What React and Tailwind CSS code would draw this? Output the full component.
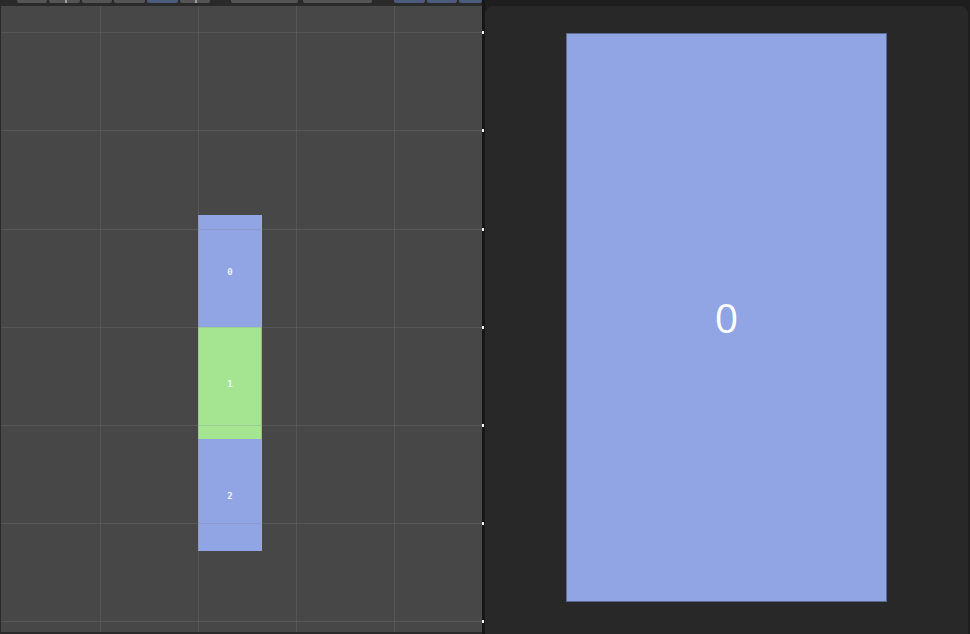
import React from "react";

const gridXs = [100, 198, 296, 394];
const gridYs = [26, 124, 223, 321, 419, 517, 615];

function Btn({ w, blue, mark }) {
  return (
    <div
      className={`h-[3px] rounded-b-[2px] relative ${blue ? "bg-[#4b5b7b]" : "bg-[#545454]"}`}
      style={{ width: w }}
    >
      {mark && <div className="absolute left-1/2 top-0 w-[2px] h-[3px] bg-[#9aa0a0]" />}
    </div>
  );
}

export default function App() {
  return (
    <div className="w-[970px] h-[634px] flex bg-[#1e1e1e] overflow-hidden" style={{ fontFamily: '"Open Sans", "DejaVu Sans", sans-serif' }}>
      {/* Left editor */}
      <div className="w-[482px] h-full flex flex-col">
        <div className="h-[6px] bg-[#2a2a2a] flex items-start pl-[17px] gap-[2px]">
          <Btn w={31} />
          <Btn w={31} mark />
          <Btn w={31} />
          <Btn w={32} />
          <Btn w={31} blue />
          <Btn w={31} mark />
          <div className="w-[17px]" />
          <Btn w={68} />
          <div className="w-[2px]" />
          <Btn w={70} />
          <div className="w-[18px]" />
          <Btn w={32} blue />
          <Btn w={31} blue />
          <Btn w={23} blue />
        </div>
        <div className="flex-1 relative bg-[#474747] border-l border-b-2 border-[#2a2a2a] overflow-hidden">
          {/* clip column */}
          <div className="absolute left-[197px] top-[209px] w-[64px] flex flex-col border-r border-[#a4acc4]">
            <div className="h-[112px] pt-[3px] pl-[1px] bg-[#91a4e4] flex items-center justify-center text-[9px] font-semibold text-[#eef1ff]" style={{ fontFamily: '"DejaVu Sans Mono", monospace' }}>0</div>
            <div className="h-[112px] pt-[3px] pl-[1px] bg-[#a5e592] flex items-center justify-center text-[9px] font-semibold text-[#f0fff0]" style={{ fontFamily: '"DejaVu Sans Mono", monospace' }}>1</div>
            <div className="h-[112px] pt-[3px] pl-[1px] bg-[#91a4e4] flex items-center justify-center text-[9px] font-semibold text-[#eef1ff]" style={{ fontFamily: '"DejaVu Sans Mono", monospace' }}>2</div>
          </div>
          <svg className="absolute inset-0 pointer-events-none" width="481" height="626">
            {gridXs.map((x) => (
              <line key={"x" + x} x1={x - 0.5} y1="0" x2={x - 0.5} y2="626" stroke="rgb(135,135,135)" strokeOpacity="0.24" strokeWidth="1" />
            ))}
            {gridYs.map((y) => (
              <line key={"y" + y} x1="0" y1={y + 0.5} x2="481" y2={y + 0.5} stroke="rgb(135,135,135)" strokeOpacity="0.24" strokeWidth="1" />
            ))}
          </svg>
        </div>
      </div>
      {/* Divider */}
      <div className="w-[3px] h-full bg-[#161616] relative">
        {gridYs.map((y) => (
          <div key={y} className="absolute left-0 w-[2px] h-[3px] bg-white" style={{ top: y + 5 }} />
        ))}
      </div>
      {/* Right preview */}
      <div className="flex-1 h-full pt-[6px] pr-[2px] bg-[#1e1e1e] flex">
        <div className="flex-1 bg-[#282828] rounded-t-[8px] flex justify-center pt-[27px]">
          <div className="w-[321px] h-[569px] bg-[#91a4e4] border border-[#5c6a96] flex items-center justify-center">
            <span className="text-[41px] text-white leading-none font-normal">0</span>
          </div>
        </div>
      </div>
    </div>
  );
}
